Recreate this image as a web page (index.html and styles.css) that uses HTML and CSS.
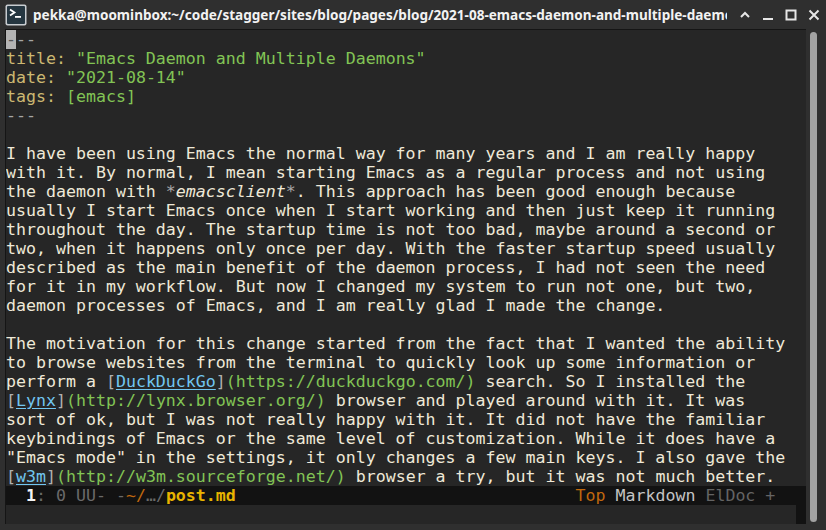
FILE: index.html
```html
<!DOCTYPE html>
<html>
<head>
<meta charset="utf-8">
<link rel="stylesheet" href="styles.css">
</head>
<body>
<div class="window">
  <div class="titlebar">
    <svg class="appicon" width="22" height="22" viewBox="0 0 22 22">
      <rect x="0.5" y="0.5" width="21" height="21" rx="2" fill="#c8ccd0"/>
      <rect x="2" y="2" width="18" height="18" rx="1" fill="#253640"/>
      <path d="M5 5.5 L9.5 8.5 L5 11.5" fill="none" stroke="#ffffff" stroke-width="1.8"/>
      <rect x="10" y="12" width="6" height="1.8" fill="#ffffff"/>
    </svg>
    <div class="title">pekka@moominbox:~/code/stagger/sites/blog/pages/blog/2021-08-emacs-daemon-and-multiple-daemons/post.md</div>
    <div class="controls">
      <svg width="12" height="12" viewBox="0 0 12 12"><path d="M2 8 L6 4 L10 8" fill="none" stroke="#e6e6e6" stroke-width="2"/></svg>
      <svg width="12" height="12" viewBox="0 0 12 12"><rect x="1" y="9" width="10" height="2" fill="#e6e6e6"/></svg>
      <svg width="12" height="12" viewBox="0 0 12 12"><rect x="1.5" y="1.5" width="9" height="9" fill="none" stroke="#e6e6e6" stroke-width="2"/></svg>
      <svg width="12" height="12" viewBox="0 0 12 12"><path d="M1.5 1.5 L10.5 10.5 M10.5 1.5 L1.5 10.5" fill="none" stroke="#e6e6e6" stroke-width="2"/></svg>
    </div>
  </div>
  <div class="body">
    <div class="frame">
      <div class="buffer">
<div class="line"><span class="cur">-</span><span class="dim">--</span></div>
<div class="line"><span class="key">title: </span><span class="str">"Emacs Daemon and Multiple Daemons"</span></div>
<div class="line"><span class="key">date: </span><span class="str">"2021-08-14"</span></div>
<div class="line"><span class="key">tags: </span><span class="str">[emacs]</span></div>
<div class="line"><span class="dim">---</span></div>
<div class="line"> </div>
<div class="line">I have been using Emacs the normal way for many years and I am really happy</div>
<div class="line">with it. By normal, I mean starting Emacs as a regular process and not using</div>
<div class="line">the daemon with <span class="dim">*</span><span class="it">emacsclient</span><span class="dim">*</span>. This approach has been good enough because</div>
<div class="line">usually I start Emacs once when I start working and then just keep it running</div>
<div class="line">throughout the day. The startup time is not too bad, maybe around a second or</div>
<div class="line">two, when it happens only once per day. With the faster startup speed usually</div>
<div class="line">described as the main benefit of the daemon process, I had not seen the need</div>
<div class="line">for it in my workflow. But now I changed my system to run not one, but two,</div>
<div class="line">daemon processes of Emacs, and I am really glad I made the change.</div>
<div class="line"> </div>
<div class="line">The motivation for this change started from the fact that I wanted the ability</div>
<div class="line">to browse websites from the terminal to quickly look up some information or</div>
<div class="line">perform a <span class="br">[</span><span class="lnk">DuckDuckGo</span><span class="br">]</span><span class="url">(https://duckduckgo.com/)</span> search. So I installed the</div>
<div class="line"><span class="br">[</span><span class="lnk">Lynx</span><span class="br">]</span><span class="url">(http://lynx.browser.org/)</span> browser and played around with it. It was</div>
<div class="line">sort of ok, but I was not really happy with it. It did not have the familiar</div>
<div class="line">keybindings of Emacs or the same level of customization. While it does have a</div>
<div class="line">"Emacs mode" in the settings, it only changes a few main keys. I also gave the</div>
<div class="line"><span class="br">[</span><span class="lnk">w3m</span><span class="br">]</span><span class="url">(http://w3m.sourceforge.net/)</span> browser a try, but it was not much better.</div>
      </div>
      <div class="modeline"><span class="ml-num">  1</span><span class="ml-dim">: 0 UU- -</span><span class="ml-or">~/</span><span class="ml-dim">…/</span><span class="ml-file">post.md</span><span>                                  </span><span class="ml-or">Top</span> <span class="ml-mode">Markdown</span> <span class="ml-minor">ElDoc +</span></div>
      <div class="minibuf"></div>
    </div>
    <div class="scrolltrack"><div class="thumb"></div></div>
  </div>
</div>
</body>
</html>
```

FILE: styles.css
```css
html, body {
  margin: 0;
  padding: 0;
}
body {
  width: 826px;
  height: 530px;
  overflow: hidden;
  background: #2f2f2f;
}
.window {
  display: flex;
  flex-direction: column;
  width: 826px;
  height: 530px;
}
.titlebar {
  height: 29px;
  display: flex;
  align-items: center;
  background: #2f2f2f;
  padding-left: 5px;
  box-sizing: border-box;
}
.appicon {
  flex: none;
  margin-right: 6px;
}
.title {
  font-family: "Noto Sans", sans-serif;
  font-weight: bold;
  font-size: 13.55px;
  color: #f2f2f2;
  width: 694px;
  white-space: nowrap;
  overflow: hidden;
  text-overflow: clip;
  flex: none;
}
.controls {
  display: flex;
  align-items: center;
  gap: 11px;
  margin-left: 12px;
}
.body {
  display: flex;
  flex: 1;
}
.frame {
  margin-left: 5px;
  width: 801px;
  height: 495px;
  border-top: 1px solid #151515;
  border-left: 1px solid #151515;
  background: #121212;
  box-sizing: border-box;
  display: flex;
  flex-direction: column;
  font-family: "DejaVu Sans Mono", monospace;
  font-size: 16.6px;
  line-height: 19px;
}
.buffer {
  background: #262626;
  color: #efe9d8;
  height: 456px;
  overflow: hidden;
}
.line {
  height: 19px;
  white-space: pre;
}
.cur {
  background: #b4b4b4;
  color: #555555;
}
.dim {
  color: #a6a6a6;
}
.key {
  color: #ccb872;
}
.str {
  color: #82c455;
}
.it {
  font-style: italic;
  color: #efe9d8;
}
.br {
  color: #b0b0b0;
}
.lnk {
  color: #72c6f0;
  text-decoration: underline;
  text-underline-offset: 2px;
}
.url {
  color: #82c455;
}
.modeline {
  height: 19px;
  background: #121212;
  white-space: pre;
  color: #6e6e6e;
}
.ml-num {
  color: #f4f4f4;
  font-weight: bold;
}
.ml-dim {
  color: #6a6a6a;
}
.ml-or {
  color: #c0680e;
}
.ml-file {
  color: #e8b400;
  font-weight: bold;
}
.ml-mode {
  color: #c4c4c4;
}
.ml-minor {
  color: #646464;
}
.minibuf {
  height: 19px;
  width: 790px;
  background: #262626;
}
.scrolltrack {
  margin-left: 4px;
  padding-top: 3px;
}
.thumb {
  width: 7px;
  height: 490px;
  border-radius: 4px;
  background: #a2a2a2;
}
```
